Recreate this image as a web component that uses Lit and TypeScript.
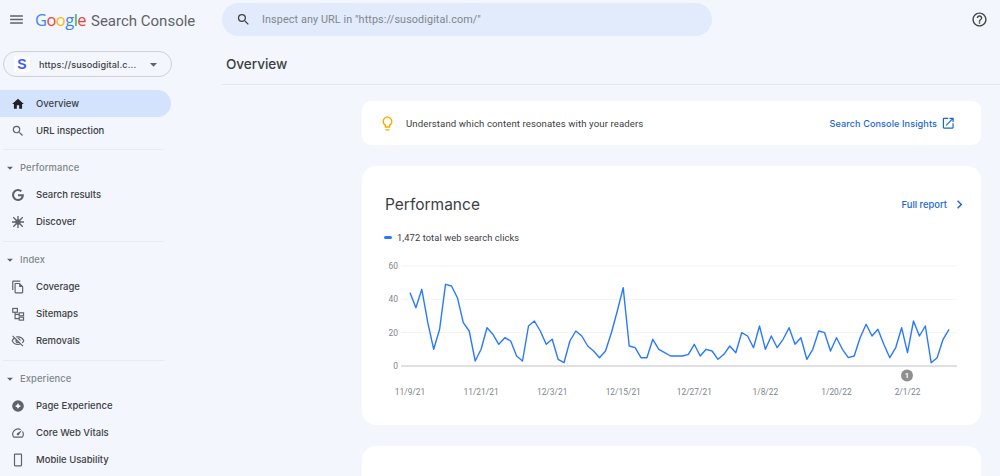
import { LitElement, html, css, svg } from "lit";
import { customElement } from "lit/decorators.js";

const DATA = [44,35,46,26,10,22,49,48,41,26,21,3,10,23,19,13,17,15,6,3,24,27,21,13,16,4,2,15,21,18,12,9,5,9,20,33,47,12,11,5,5,16,10,8,6,6,6,7,13,6,10,9,4,7,12,8,20,18,11,24,10,18,11,16,23,13,17,4,10,21,20,9,17,10,5,6,17,25,18,22,13,5,11,23,8,27,18,24,2,5,16,22];
const LABELS = ["11/9/21","11/21/21","12/3/21","12/15/21","12/27/21","1/8/22","1/20/22","2/1/22"];

const ICONS: Record<string, any> = {
  home: svg`<path d="M10 20v-6h4v6h5v-8h3L12 3 2 12h3v8z"/>`,
  search: svg`<path d="M15.5 14h-.79l-.28-.27A6.47 6.47 0 0 0 16 9.5 6.5 6.5 0 1 0 9.5 16c1.61 0 3.09-.59 4.23-1.57l.27.28v.79l5 4.99L20.49 19l-4.99-5zm-6 0C7.01 14 5 11.99 5 9.5S7.01 5 9.5 5 14 7.01 14 9.5 11.99 14 9.5 14z"/>`,
  google: svg`<path d="M19.6 11H12v2.9h5.4c-.5 2.4-2.6 4.1-5.4 4.1-3.3 0-5.9-2.7-5.9-6s2.6-6 5.9-6c1.5 0 2.9.5 4 1.5l2.1-2.1A8.9 8.9 0 0 0 12 3a9 9 0 1 0 0 18c4.7 0 8.8-3.4 8.8-9 0-.3-.1-.7-.2-1z"/>`,
  discover: svg`<path d="M11 3h2v18h-2zM3 11h18v2H3zM5.6 4.2l14.2 14.2-1.4 1.4L4.2 5.6zM18.4 4.2l1.4 1.4L5.6 19.8l-1.4-1.4z"/><circle cx="12" cy="12" r="4"/>`,
  coverage: svg`<path d="M16 1H4c-1.1 0-2 .9-2 2v14h2V3h12V1zm-1 4H8c-1.1 0-1.99.9-1.99 2L6 21c0 1.1.89 2 1.99 2H19c1.1 0 2-.9 2-2V11l-6-6zM8 21V7h6v5h5v9H8z"/>`,
  sitemaps: svg`<g fill="none" stroke="currentColor" stroke-width="2"><rect x="3" y="2.500" width="8" height="6.500"/><rect x="14" y="10" width="7.500" height="5"/><rect x="14" y="17.500" width="7.500" height="5"/><path d="M7 9v11h7M7 12.500h7"/></g>`,
  removals: svg`<path d="M12 6c3.79 0 7.17 2.13 8.82 5.5-.59 1.22-1.42 2.27-2.41 3.12l1.41 1.41c1.39-1.23 2.49-2.77 3.18-4.53C21.27 7.11 17 4 12 4c-1.27 0-2.49.2-3.64.57l1.65 1.65C10.66 6.09 11.32 6 12 6zm-1.07 1.14L13 9.21c.57.25 1.03.71 1.28 1.28l2.07 2.07c.08-.34.14-.7.14-1.07C16.5 9.01 14.48 7 12 7c-.37 0-.72.05-1.07.14zM2.01 3.87l2.68 2.68A11.74 11.74 0 0 0 1 11.5C2.73 15.89 7 19 12 19c1.52 0 2.98-.29 4.32-.82l3.42 3.42 1.41-1.41L3.42 2.45 2.01 3.87zm7.5 7.5l2.61 2.61c-.04.01-.08.02-.12.02a2.5 2.5 0 0 1-2.5-2.5c0-.05.01-.08.01-.13zm-3.4-3.4l1.75 1.75a4.6 4.6 0 0 0-.36 1.78 4.507 4.507 0 0 0 6.27 4.14l.98.98c-.88.24-1.8.38-2.75.38a9.77 9.77 0 0 1-8.82-5.5c.7-1.43 1.72-2.61 2.93-3.53z"/>`,
  page: svg`<path fill-rule="evenodd" d="M12 2a10 10 0 1 0 0 20 10 10 0 0 0 0-20zm-1.500 6h3v2.500H16v3h-2.500V16h-3v-2.500H8v-3h2.500V8z"/>`,
  vitals: svg`<path d="M20.38 8.57l-1.23 1.85a8 8 0 0 1-.22 7.58H5.07A8 8 0 0 1 15.58 6.85l1.85-1.23A10 10 0 0 0 3.35 19a2 2 0 0 0 1.72 1h13.85a2 2 0 0 0 1.74-1 10 10 0 0 0-.27-10.44zm-9.79 6.84a2 2 0 0 0 2.83 0l5.66-8.49-8.49 5.66a2 2 0 0 0 0 2.83z"/>`,
  mobile: svg`<path d="M17 1H7c-1.1 0-2 .9-2 2v18c0 1.1.9 2 2 2h10c1.1 0 2-.9 2-2V3c0-1.1-.9-2-2-2zm0 20H7V3h10v18z"/>`,
  bulb: svg`<path d="M9 21c0 .55.45 1 1 1h4c.55 0 1-.45 1-1v-1H9v1zm3-19C8.14 2 5 5.14 5 9c0 2.38 1.19 4.47 3 5.74V17c0 .55.45 1 1 1h6c.55 0 1-.45 1-1v-2.26c1.81-1.27 3-3.36 3-5.74 0-3.86-3.14-7-7-7zm2.85 11.1l-.85.6V16h-4v-2.3l-.85-.6A4.997 4.997 0 0 1 7 9c0-2.76 2.24-5 5-5s5 2.24 5 5c0 1.63-.8 3.16-2.15 4.1z"/>`,
  open: svg`<path d="M19 19H5V5h7V3H5c-1.11 0-2 .9-2 2v14c0 1.1.89 2 2 2h14c1.1 0 2-.9 2-2v-7h-2v7zM14 3v2h3.59l-9.83 9.83 1.41 1.41L19 6.41V10h2V3h-7z"/>`,
  chevron: svg`<path d="M10 6L8.59 7.41 13.17 12l-4.58 4.59L10 18l6-6z"/>`,
  help: svg`<path d="M11 18h2v-2h-2v2zm1-16C6.48 2 2 6.48 2 12s4.48 10 10 10 10-4.48 10-10S17.52 2 12 2zm0 18c-4.41 0-8-3.59-8-8s3.59-8 8-8 8 3.59 8 8-3.59 8-8 8zm0-14c-2.21 0-4 1.79-4 4h2c0-1.1.9-2 2-2s2 .9 2 2c0 2-3 1.75-3 5h2c0-2.25 3-2.5 3-5 0-2.21-1.79-4-4-4z"/>`,
  menu: svg`<path d="M3 18h18v-2H3v2zm0-5h18v-2H3v2zm0-7v2h18V6H3z"/>`,
  caret: svg`<path d="M7 10l5 5 5-5z"/>`,
};

const icon = (name: string, cls = "") =>
  html`<svg class="icon i-${name} ${cls}" viewBox="0 0 24 24" fill="currentColor" aria-hidden="true">${ICONS[name]}</svg>`;

const SECTIONS = [
  { items: [["home","Overview",true],["search","URL inspection"]] },
  { title: "Performance", items: [["google","Search results"],["discover","Discover"]] },
  { title: "Index", items: [["coverage","Coverage"],["sitemaps","Sitemaps"],["removals","Removals"]] },
  { title: "Experience", items: [["page","Page Experience"],["vitals","Core Web Vitals"],["mobile","Mobile Usability"]] },
];

@customElement("app-root")
export class AppRoot extends LitElement {
  static styles = css`
    :host { display: block; width: 1000px; height: 476px; overflow: hidden; background: #f3f6fc; font-family: Roboto, "Liberation Sans", sans-serif; color: #3c4043; }
    .icon { display: block; flex: none; width: 14px; height: 14px; }
    .top { display: flex; align-items: center; height: 39px; }
    .menu { width: 17px; height: 17px; margin-left: 8px; color: #5f6368; }
    .brand { display: flex; align-items: baseline; margin-left: 10px; width: 187px; font-family: Roboto, sans-serif; font-size: 15px; color: #5f6368; white-space: nowrap; }
    .logo { font-family: "Open Sans", sans-serif; font-size: 16.5px; letter-spacing: -0.55px; margin-right: 5px; }
    .b { color: #4285f4; } .r { color: #ea4335; } .y { color: #fbbc05; } .g { color: #34a853; }
    .search { display: flex; align-items: center; width: 490px; height: 33px; border-radius: 17px; background: #e1ebfb; color: #5f6368; font-size: 10.8px; }
    .search .icon { width: 15px; height: 15px; margin: 0 11px 0 14px; color: #444; }
    .search span { color: #80868b; letter-spacing: .1px; }
    .help { width: 17px; height: 17px; margin-left: auto; margin-right: 12px; color: #444; }
    .body { display: flex; }
    .side { width: 222px; flex: none; }
    .prop { display: flex; align-items: center; box-sizing: border-box; width: 169px; height: 26px; margin: 12px 0 13px 3px; border: 1px solid #cdd1d6; border-radius: 13px; font: 500 9.1px Inter, Roboto, sans-serif; color: #3c4043; letter-spacing: .1px; }
    .fav { display: grid; place-items: center; width: 16px; height: 16px; margin: 0 9px 0 10px; background: #fff; color: #3d5afe; font: 700 14px "Liberation Sans", sans-serif; }
    .prop .caret { width: 17px; height: 17px; margin-left: auto; margin-right: 9px; color: #5f6368; }
    nav { width: 171px; }
    .row { display: flex; align-items: center; height: 27px; font: 500 9.5px Inter, Roboto, sans-serif; color: #3c4043; border-radius: 0 14px 14px 0; }
    .row .icon { margin: 0 11px 0 11px; color: #5f6368; }
    .row .i-google { width: 16px; height: 16px; margin: 0 10px; }
    .row .i-discover { width: 16px; height: 16px; margin: 0 10px; }
    .row.active { background: #d3e3fd; }
    .row.active .icon { color: #202124; }
    .sect + .sect { border-top: 1px solid #e8ebf0; margin: 5px 7px 0 3px; padding-top: 4px; }
    .sect + .sect + .sect { margin-top: 6px; }
    .sect + .sect .row, .sect + .sect .head { margin-left: -3px; }
    .head { display: flex; align-items: center; height: 27px; font: 500 9.4px Inter, Roboto, sans-serif; color: #80868b; letter-spacing: .1px; }
    .head .icon { width: 14px; height: 14px; margin: 0 3px 0 3px; color: #5f6368; }
    main { flex: 1; min-width: 0; }
    h1 { margin: 0; box-sizing: border-box; height: 46px; padding: 17px 0 0 4px; border-bottom: 1px solid #e3e6ea; font: 500 13.6px "Inter", Roboto, sans-serif; color: #3c4043; letter-spacing: -.05px; }
    .content { display: flex; flex-direction: column; gap: 21px; margin: 16px 19px 0 140px; }
    .card { background: #fff; }
    .tip { display: flex; align-items: center; height: 44px; border-radius: 9px; font-size: 9.6px; color: #3c4043; letter-spacing: .1px; }
    .tip .bulb { width: 17px; height: 17px; margin: 0 10px 0 17px; color: #f9ab00; }
    .link { display: flex; align-items: center; margin-left: auto; font: 500 9.4px Inter, Roboto, sans-serif; color: #1a66d6; }
    .tip .link { margin-right: 26px; font-size: 9.1px; }
    .tip .link .icon { width: 14.5px; height: 14.5px; margin-left: 3.5px; }
    .perf .link .icon { width: 17px; height: 17px; margin-left: 4px; }
    .perf { height: 259px; border-radius: 14px; }
    .perf-head { display: flex; align-items: center; height: 20px; padding: 28px 13px 0 23px; }
    h2 { margin: 0; font: 400 15.5px Inter, Roboto, sans-serif; color: #3c4043; }
    .legend { display: flex; align-items: center; gap: 5px; margin: 18px 0 0 22px; font-size: 9.3px; color: #3c4043; letter-spacing: .1px; }
    .dash { width: 8px; height: 3px; border-radius: 2px; background: #2979ff; }
    .chart { display: block; margin-top: 7px; }
    .chart text { font: 8.4px Roboto, sans-serif; fill: #80868b; }
    .chart .one { font-size: 7.5px; fill: #fff; font-weight: 700; }
    .empty { height: 60px; border-radius: 14px; }
  `;

  private chart() {
    const x = (i: number) => 48 + i * 5.923;
    const y = (v: number) => 116 - v * 1.667;
    const pts = DATA.map((v, i) => `${x(i).toFixed(1)},${y(v).toFixed(1)}`).join(" ");
    return html`<svg class="chart" width="619" height="160" viewBox="0 0 619 160">
      ${[60, 40, 20].map((v) => svg`<line x1="39" x2="595" y1=${y(v)} y2=${y(v)} stroke="#f1f3f4"/>
        <text x="36" y=${y(v) + 3} text-anchor="end">${v}</text>`)}
      <text x="36" y=${y(0) + 3} text-anchor="end">0</text>
      <line x1="39" x2="595" y1="116" y2="116" stroke="#bdc1c6"/>
      <polyline points=${pts} fill="none" stroke="#2979ff" stroke-width="1.4" stroke-linejoin="round"/>
      ${LABELS.map((l, i) => svg`<text x=${x(i * 12)} y="145" text-anchor="middle">${l}</text>`)}
      <circle cx="545" cy="125.500" r="6" fill="#8f8f8f"/>
      <text class="one" x="545" y="128.200" text-anchor="middle">1</text>
    </svg>`;
  }

  render() {
    return html`
      <div class="top">
        ${icon("menu", "menu")}
        <div class="brand">
          <span class="logo"><span class="b">G</span><span class="r">o</span><span class="y">o</span><span class="b">g</span><span class="g">l</span><span class="r">e</span></span>
          Search Console
        </div>
        <div class="search">${icon("search")}<span>Inspect any URL in "https://susodigital.com/"</span></div>
        ${icon("help", "help")}
      </div>
      <div class="body">
        <aside class="side">
          <div class="prop"><span class="fav">S</span>https://susodigital.c...${icon("caret", "caret")}</div>
          <nav>
            ${SECTIONS.map((s) => html`<div class="sect">
              ${s.title ? html`<div class="head">${icon("caret")}${s.title}</div>` : ""}
              ${s.items.map((it) => html`<div class="row ${it[2] ? "active" : ""}">${icon(it[0] as string)}${it[1]}</div>`)}
            </div>`)}
          </nav>
        </aside>
        <main>
          <h1>Overview</h1>
          <div class="content">
            <div class="card tip">${icon("bulb", "bulb")}Understand which content resonates with your readers
              <span class="link">Search Console Insights${icon("open")}</span>
            </div>
            <div class="card perf">
              <div class="perf-head"><h2>Performance</h2><span class="link">Full report${icon("chevron")}</span></div>
              <div class="legend"><span class="dash"></span>1,472 total web search clicks</div>
              ${this.chart()}
            </div>
            <div class="card empty"></div>
          </div>
        </main>
      </div>
    `;
  }
}
